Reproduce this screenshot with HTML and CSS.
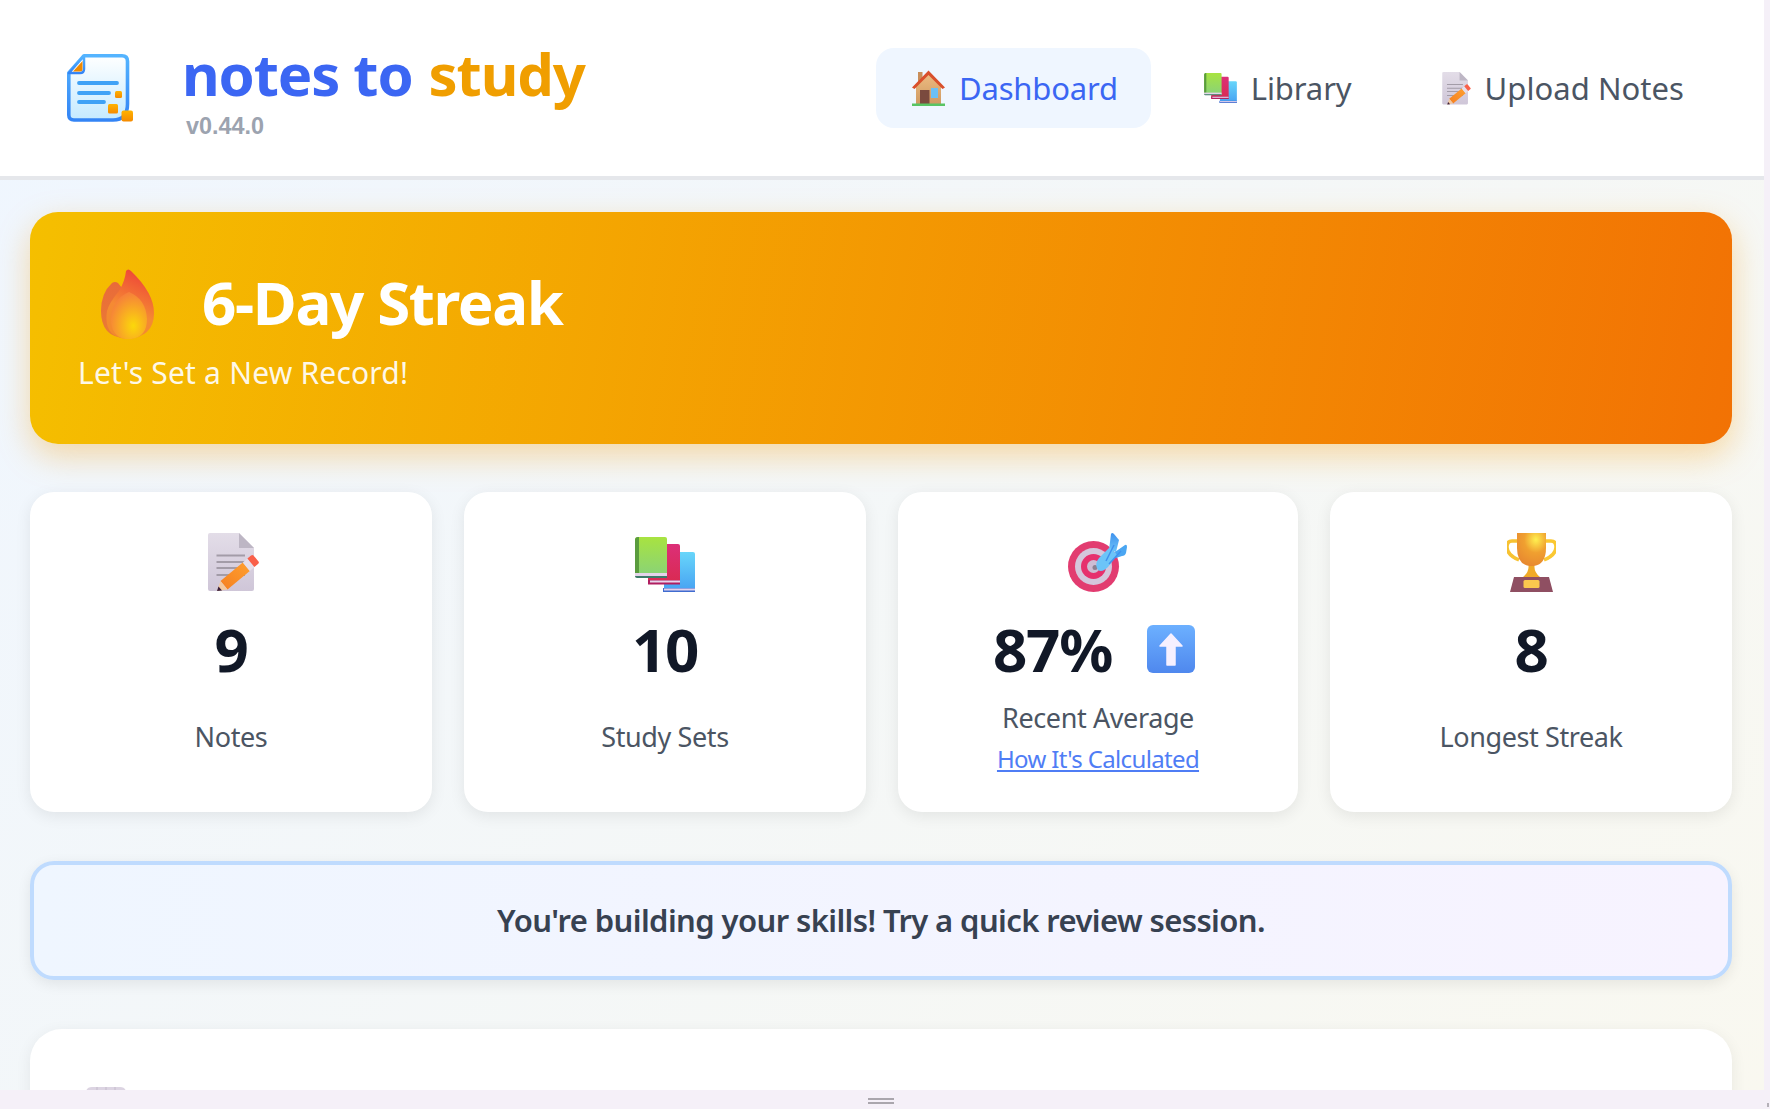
FILE: index.html
```html
<!DOCTYPE html>
<html lang="en">
<head>
<meta charset="utf-8">
<title>notes to study</title>
<link rel="stylesheet" href="styles.css">
</head>
<body>
<svg class="defs" width="0" height="0" aria-hidden="true">
  <defs>
    <linearGradient id="logoStroke" x1="0" y1="0" x2="0" y2="1"><stop offset="0" stop-color="#54b4ff"/><stop offset="1" stop-color="#3384f5"/></linearGradient>
    <linearGradient id="logoFill" x1="0" y1="0" x2="0" y2="1"><stop offset="0" stop-color="#ffffff"/><stop offset="1" stop-color="#c4eaff"/></linearGradient>
    <linearGradient id="orange" x1="0" y1="0" x2="0" y2="1"><stop offset="0" stop-color="#ffb300"/><stop offset="1" stop-color="#f58a00"/></linearGradient>
    <linearGradient id="paper" x1="0" y1="0" x2="0" y2="1"><stop offset="0" stop-color="#e3dde8"/><stop offset="1" stop-color="#cfc6d8"/></linearGradient>
    <linearGradient id="pencil" x1="0" y1="1" x2="1" y2="0"><stop offset="0" stop-color="#f57f20"/><stop offset="1" stop-color="#ffa030"/></linearGradient>
    <linearGradient id="bookGreen" x1="0" y1="0" x2="0" y2="1"><stop offset="0" stop-color="#a8e340"/><stop offset="1" stop-color="#88d27a"/></linearGradient>
    <linearGradient id="bookRed" x1="0" y1="0" x2="0" y2="1"><stop offset="0" stop-color="#dc2f78"/><stop offset="1" stop-color="#d92a50"/></linearGradient>
    <linearGradient id="bookBlue" x1="0" y1="0" x2="0" y2="1"><stop offset="0" stop-color="#68d6fa"/><stop offset="1" stop-color="#46a0f2"/></linearGradient>
    <linearGradient id="houseWall" x1="0" y1="0" x2="0" y2="1"><stop offset="0" stop-color="#eebc82"/><stop offset="1" stop-color="#cf9a62"/></linearGradient>
    <linearGradient id="flameOuter" x1="0.7" y1="0" x2="0.4" y2="1"><stop offset="0" stop-color="#ee4238"/><stop offset="0.6" stop-color="#f58a33"/><stop offset="1" stop-color="#f28a2d"/></linearGradient>
    <linearGradient id="flameBack" x1="0" y1="0" x2="0" y2="1"><stop offset="0" stop-color="#e96a3a"/><stop offset="1" stop-color="#ea7d33"/></linearGradient>
    <radialGradient id="flameInner" cx="0.62" cy="0.72" r="0.7"><stop offset="0" stop-color="#fbd80a"/><stop offset="1" stop-color="#f6813a"/></radialGradient>
    <linearGradient id="arrowBox" x1="0" y1="0" x2="0" y2="1"><stop offset="0" stop-color="#6cb0ff"/><stop offset="1" stop-color="#4f88ee"/></linearGradient>
    <linearGradient id="dart" x1="0" y1="0" x2="0" y2="1"><stop offset="0" stop-color="#3f92ee"/><stop offset="1" stop-color="#6cc4f8"/></linearGradient>
    <radialGradient id="trophyCup" cx="0.65" cy="0.2" r="0.8"><stop offset="0" stop-color="#fff050"/><stop offset="0.5" stop-color="#f0a030"/><stop offset="1" stop-color="#e88a30"/></radialGradient>

    <symbol id="i-doc" viewBox="0 0 51 59">
      <path d="M0 2Q0 0 2 0H31L46 15V56Q46 58 44 58H2Q0 58 0 56Z" fill="url(#paper)"/>
      <path d="M31 0L46 15H31Z" fill="#bdb6c4"/>
      <path d="M8.500 22.500H37M8.500 29H37M8.500 35H37M8.500 42H37" stroke="#a39ca8" stroke-width="1.800" fill="none"/>
      <path d="M12.500 48L34.800 29.500L41.800 37.900L19.500 56.400Z" fill="url(#pencil)"/>
      <path d="M34.800 29.500L39.400 25.600L46.400 34L41.800 37.900Z" fill="#e6dfea"/>
      <path d="M39.400 25.600L43 22.500Q44.500 21.500 45.500 22.500L50.500 28.500Q51.500 30 50 31L46.400 34Z" fill="#f9604a"/>
      <path d="M9 58L12.500 48L19.500 56.400Z" fill="#f3c9a0"/>
      <path d="M9 58L10.500 53.500L14 57.500Z" fill="#3a1f3a"/>
    </symbol>
    <symbol id="i-books" viewBox="0 0 60 55">
      <path d="M29 16Q29 15 30 15H58Q60 15 60 17V55H29Z" fill="url(#bookBlue)"/>
      <rect x="28" y="51" width="32" height="4" fill="#3f6cd0"/>
      <rect x="29" y="51.500" width="31" height="2" fill="#e2d2ec"/>
      <path d="M13 7H43Q45 7 45 9V47H13Z" fill="url(#bookRed)"/>
      <rect x="13" y="43" width="32" height="4.500" fill="#b01e60"/>
      <rect x="15" y="43.500" width="30" height="2" fill="#e8d5ec"/>
      <path d="M3 0H30Q32 0 32 2V40H0V3Q0 0 3 0Z" fill="url(#bookGreen)"/>
      <path d="M3 0H4V36H0V3Q0 0 3 0Z" fill="#5a9c3e"/>
      <path d="M0 36H32V39.800H0Z" fill="#e4d4ea"/>
      <path d="M0 39H32V41H2Q0 41 0 39Z" fill="#3d7a6a"/>
    </symbol>
  </defs>
</svg>

<div class="viewport">
  <header class="topbar">
    <div class="brand">
      <svg class="logo" viewBox="0 0 66 68">
        <path d="M17 1.800H55Q60.500 1.800 60.500 7.300V50Q60.500 66 46 66H7Q1.800 66 1.800 61V19Z" fill="url(#logoFill)" stroke="url(#logoStroke)" stroke-width="3.600" stroke-linejoin="round"/>
        <path d="M17 2L2 19H13Q17 19 17 15Z" fill="#fff" stroke="url(#logoStroke)" stroke-width="2.500" stroke-linejoin="round"/>
        <path d="M15.500 7L6 17.500H13Q15.500 17.500 15.500 15Z" fill="#f08a00"/>
        <path d="M12 29H50M12 39H42M12 48H37" stroke="#3fa2f6" stroke-width="3.800" stroke-linecap="round" fill="none"/>
        <rect x="48" y="37" width="7" height="7" rx="1.500" fill="url(#orange)"/>
        <rect x="41" y="50" width="10" height="9.500" rx="1.500" fill="url(#orange)"/>
        <rect x="54.500" y="56.500" width="11.500" height="11" rx="2" fill="url(#orange)"/>
      </svg>
      <div class="brand-text">
        <div class="brand-name"><span class="brand-blue">notes to</span> <span class="brand-amber">study</span></div>
        <div class="version">v0.44.0</div>
      </div>
    </div>
    <nav class="nav">
      <a class="nav-link active">
        <svg class="nav-icon house" viewBox="0 0 33 36">
          <rect x="6" y="2" width="4.500" height="12" fill="#c98e5a"/>
          <path d="M4 16L16.500 3L29 16V34H4Z" fill="url(#houseWall)"/>
          <path d="M0 17.500L16.500 0.500L33 17.500L30.500 19L16.500 5L2.500 19Z" fill="#d9502c"/>
          <rect x="8" y="20" width="9.500" height="14" fill="#7a4a3e"/>
          <rect x="19" y="18" width="7" height="10" fill="#6cc0f5"/>
          <rect x="0" y="33.500" width="33" height="2.500" fill="#58c464"/>
        </svg>
        Dashboard
      </a>
      <a class="nav-link library">
        <svg class="nav-icon books"><use href="#i-books"/></svg>
        Library
      </a>
      <a class="nav-link upload">
        <svg class="nav-icon doc"><use href="#i-doc"/></svg>
        Upload Notes
      </a>
    </nav>
  </header>

  <main class="content">
    <section class="streak">
      <div class="streak-head">
        <svg class="flame" viewBox="0 0 53 70">
          <path d="M11 14Q14 12 17 14L30 30V69H24Q0 68 0 42Q0 24 11 14Z" fill="url(#flameBack)"/>
          <path d="M25 2Q27 -1 30 2Q53 24 53 44Q53 68 26 70Q2 68 6 42Q8 34 18 22Q24 12 25 2Z" fill="url(#flameOuter)"/>
          <path d="M28 23Q45 30 46 50Q46 68 30 70H24Q10 67 10 50Q11 30 28 23Z" fill="url(#flameInner)"/>
        </svg>
        <h1 class="streak-title">6-Day Streak</h1>
      </div>
      <p class="streak-sub">Let's Set a New Record!</p>
    </section>

    <section class="stats">
      <article class="stat">
        <svg class="stat-icon doc-lg"><use href="#i-doc"/></svg>
        <div class="stat-value">9</div>
        <div class="stat-foot"><div class="stat-label">Notes</div></div>
      </article>
      <article class="stat">
        <svg class="stat-icon books-lg"><use href="#i-books"/></svg>
        <div class="stat-value">10</div>
        <div class="stat-foot"><div class="stat-label">Study Sets</div></div>
      </article>
      <article class="stat">
        <svg class="stat-icon target" viewBox="0 0 59 59">
          <circle cx="25.500" cy="33.500" r="25.500" fill="#e23c70"/>
          <circle cx="25.500" cy="33.500" r="18.500" fill="#d4c6dc"/>
          <circle cx="25.500" cy="33.500" r="12.500" fill="#e6306e"/>
          <circle cx="25.500" cy="33.500" r="6.500" fill="#cdbdd4"/>
          <circle cx="27" cy="34.500" r="2.500" fill="#8a8090"/>
          <path d="M41 17L43 1Q44 -1 46 1L51 7L48 19Z" fill="url(#dart)"/>
          <path d="M47 19L57 12Q59 11 59 14L58 20Q57 23 54 23L48 25Z" fill="#4aa6f2"/>
          <path d="M30 37Q26 31 31 25L42 14L49 22L40 34Q34 40 30 37Z" fill="#6cc4f8"/>
          <path d="M38 28L46 12M41 31L53 18" stroke="#3f92ee" stroke-width="1.500" fill="none"/>
        </svg>
        <div class="stat-value">87% <svg class="trend" viewBox="0 0 48 48">
            <rect width="48" height="48" rx="6" fill="url(#arrowBox)"/>
            <path d="M24 9L35 21H28V40H20V21H13Z" fill="#f6f0ff" stroke="#f6f0ff" stroke-width="1.500" stroke-linejoin="round"/>
          </svg></div>
        <div class="stat-foot">
          <div class="stat-label">Recent Average</div>
          <a class="stat-link" href="#">How It's Calculated</a>
        </div>
      </article>
      <article class="stat">
        <svg class="stat-icon trophy" viewBox="0 0 49 59">
          <path d="M10 8H5Q0 8 0 14Q0 22 12 27" fill="none" stroke="#f7c232" stroke-width="3.500"/>
          <path d="M39 8H44Q49 8 49 14Q49 22 37 27" fill="none" stroke="#fbc832" stroke-width="3.500"/>
          <path d="M10 0H39V15Q39 31 27 33H22Q10 31 10 15Z" fill="url(#trophyCup)"/>
          <path d="M21.500 33H27.500Q27 39 33 44H16Q22 39 21.500 33Z" fill="#f0aa28"/>
          <path d="M7 44H42L46 59H3Z" fill="#8f4f62"/>
          <rect x="16.500" y="47" width="16" height="8" rx="1.500" fill="#fbc84e"/>
        </svg>
        <div class="stat-value">8</div>
        <div class="stat-foot"><div class="stat-label">Longest Streak</div></div>
      </article>
    </section>

    <section class="message">You're building your skills! Try a quick review session.</section>

    <section class="panel">
      <svg class="panel-icon" viewBox="0 0 40 40">
        <path d="M0 40V6Q0 0 6 0H34Q40 0 40 6V40Z" fill="#dcd4e2"/>
        <path d="M11 0V40M20 0V40M29 0V40" stroke="#c4bccc" stroke-width="1"/>
      </svg>
    </section>
  </main>
</div>
<footer class="dock">
  <span class="grip"></span>
  <span class="corner"></span>
</footer>
</body>
</html>
```

FILE: styles.css
```css
* { box-sizing: border-box; }
html, body { margin: 0; height: 100%; overflow: hidden; }
body {
  display: flex;
  flex-direction: column;
  background: #f5f0f8;
  font-family: "Noto Sans", "Liberation Sans", sans-serif;
  color: #111827;
}
.defs { position: absolute; }

.viewport {
  flex: none;
  height: 1090px;
  display: flex;
  flex-direction: column;
  width: 1764px;
  overflow: hidden;
  background: linear-gradient(135deg, #eff6ff 0%, #f9f8f0 100%);
}

.topbar {
  flex: none;
  height: 180px;
  display: flex;
  align-items: flex-start;
  justify-content: space-between;
  background: #fff;
  border-bottom: 4px solid #e5e7eb;
  padding: 48px 47px 0 67px;
}
.brand { display: flex; align-items: flex-start; gap: 49px; margin-top: 6px; }
.logo { width: 66px; height: 68px; flex: none; }
.brand-text { margin-top: -17px; }
.brand-name {
  font-size: 58px;
  line-height: 74px;
  font-weight: 700;
  letter-spacing: -1.100px;
  white-space: nowrap;
}
.brand-blue { color: #3b66f3; }
.brand-amber { color: #f09e00; margin-left: 2px; }
.version {
  font-family: "Liberation Sans", sans-serif;
  font-size: 23.400px;
  line-height: 26px;
  font-weight: 700;
  color: #9ca3af;
  margin: 2px 0 0 4px;
}

.nav { display: flex; align-items: center; gap: 17px; }
.nav-link {
  display: flex;
  align-items: center;
  gap: 14px;
  height: 80px;
  padding: 0 33px 0 36px;
  border-radius: 18px;
  font-size: 31px;
  color: #4b5563;
  letter-spacing: -0.100px;
  white-space: nowrap;
}
.nav-link.active { background: #eff6ff; color: #3b66f3; letter-spacing: -0.200px; }
.nav-link.library { padding-right: 37px; }
.nav-link.upload { letter-spacing: 0.050px; }
.nav-icon { flex: none; }
.nav-icon.house { width: 33px; height: 36px; }
.nav-icon.books { width: 33px; height: 30px; }
.nav-icon.doc { width: 29px; height: 33px; }

.content {
  flex: 1;
  min-height: 0;
  padding: 32px 32px 0 30px;
  display: flex;
  flex-direction: column;
}

.streak {
  flex: none;
  height: 232px;
  border-radius: 28px;
  padding: 57px 48px 0;
  background: linear-gradient(100deg, #f5bf00 0%, #f27204 100%);
  box-shadow: 0 12px 32px rgba(245, 158, 11, 0.35);
  color: #fff;
}
.streak-head { display: flex; align-items: flex-start; gap: 48px; margin-left: 23px; }
.flame { width: 53px; height: 70px; flex: none; }
.streak-title { margin: -2px 0 0; font-size: 60px; line-height: 70px; font-weight: 700; letter-spacing: -1.350px; }
.streak-sub { margin: 14px 0 0; font-size: 30px; line-height: 40px; letter-spacing: 0.200px; color: rgba(255,255,255,.92); }

.stats {
  flex: none;
  margin-top: 48px;
  display: grid;
  grid-template-columns: 1fr 1fr 400px 1fr;
  gap: 32px;
  height: 320px;
}
.stat {
  background: #fff;
  border-radius: 24px;
  box-shadow: 0 4px 16px rgba(0, 0, 0, 0.08);
  padding-top: 41px;
  display: flex;
  flex-direction: column;
  align-items: center;
  text-align: center;
}
.stat-icon { flex: none; height: 59px; }
.stat-icon.doc-lg { width: 51px; margin-left: 4px; }
.stat-icon.books-lg { width: 60px; height: 55px; margin-top: 4px; }
.stat-icon.target { width: 59px; margin-right: 2px; }
.stat-icon.trophy { width: 49px; }
.stat-value {
  display: flex;
  align-items: center;
  justify-content: center;
  gap: 35px;
  height: 60px;
  margin-top: 27px;
  font-size: 60px;
  line-height: 60px;
  font-weight: 700;
  letter-spacing: -1.200px;
  color: #111827;
}
.trend { width: 48px; height: 48px; flex: none; margin-right: 8px; }
.stat-foot {
  flex: 1;
  display: flex;
  flex-direction: column;
  align-items: center;
  justify-content: center;
  padding-bottom: 18px;
}
.stat-label { font-size: 27px; line-height: 36px; color: #4b5563; letter-spacing: -0.400px; }
.stat-link { font-size: 24px; line-height: 34px; margin: 6px 0 -3px; color: #4f7df5; letter-spacing: -0.650px; }

.message {
  flex: none;
  margin-top: 49px;
  height: 119px;
  display: flex;
  align-items: center;
  justify-content: center;
  border: 4px solid #bfdbfe;
  border-radius: 24px;
  padding-bottom: 2px;
  background: linear-gradient(90deg, #eff6ff 0%, #f7f3ff 100%);
  box-shadow: 0 4px 14px rgba(0, 0, 0, 0.08);
  font-size: 31px;
  font-weight: 600;
  color: #374151;
  letter-spacing: -0.600px;
}

.panel {
  flex: none;
  margin-top: 49px;
  height: 300px;
  background: #fff;
  border-radius: 32px;
  box-shadow: 0 4px 16px rgba(0, 0, 0, 0.07);
  padding: 58px 0 0 56px;
}
.panel-icon { display: block; width: 40px; height: 40px; }

.dock {
  flex: none;
  height: 19px;
  display: flex;
  align-items: center;
  justify-content: center;
  background: #f5f0f8;
  padding: 3px 8px 0 0;
  position: relative;
}
.grip {
  width: 26px;
  height: 6px;
  border-top: 2px solid #aaa6ad;
  border-bottom: 2px solid #aaa6ad;
}
.corner {
  position: absolute;
  right: 1px;
  bottom: 2px;
  width: 2px;
  height: 4px;
  background: #b5b1b8;
}
```
